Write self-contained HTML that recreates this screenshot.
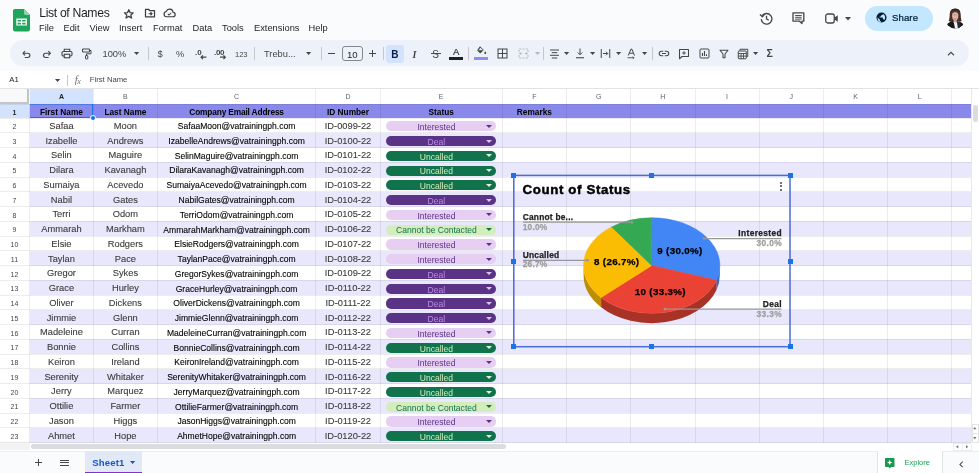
<!DOCTYPE html><html><head><meta charset="utf-8"><title>List of Names</title>
<style>
*{box-sizing:border-box;margin:0;padding:0}
html,body{width:979px;height:473px;overflow:hidden;background:#f9fbfd;font-family:"Liberation Sans",sans-serif;color:#1f1f1f}
.abs,.abs *{position:absolute}
#app{will-change:transform;position:relative;width:979px;height:473px;overflow:hidden;background:#f9fbfd}
.t{position:absolute;white-space:nowrap;line-height:1}
.menu{font-size:9.3px;color:#1f1f1f;top:23.5px}
.ch{font-size:7px;color:#5f6368;text-align:center;top:92.8px}
.rh{font-size:7px;color:#444746;text-align:center;left:0;width:29px}
.c{position:absolute;text-align:center;white-space:nowrap;line-height:1;color:#3a3a3a}
.ca{font-size:9.3px;-webkit-text-stroke:.1px #3a3a3a}
.cc{font-size:8.55px;color:#000;-webkit-text-stroke:.1px #000}
.hd{font-family:"Liberation Sans",sans-serif;font-weight:bold;font-size:8.3px;color:#000}
.chip{position:absolute;border-radius:5.1px;height:10.2px;font-size:8.55px;text-align:center;white-space:nowrap}
.chip b{position:absolute;left:0;right:9.5px;top:.9px;line-height:10px;font-weight:normal;text-align:center}
.chip i{position:absolute;right:4.1px;top:3.6px;width:0;height:0;border-left:3px solid transparent;border-right:3px solid transparent;border-top:3.6px solid currentColor}
svg{position:absolute;overflow:visible}
.lb{font-size:8.400px;font-weight:bold;letter-spacing:.22px;-webkit-text-stroke:.25px currentColor}
.sl{font-size:9.800px;font-weight:bold;color:#000;text-align:center;letter-spacing:.3px;-webkit-text-stroke:.25px #000}
</style></head><body><div id="app">
<svg style="left:13.200px;top:8.800px" width="17" height="22.400" viewBox="0 0 17 22.400"><path d="M1.800 0h9.200l6 6v14.600a1.800 1.800 0 0 1-1.800 1.800H1.800A1.800 1.800 0 0 1 0 20.600V1.800A1.800 1.800 0 0 1 1.800 0z" fill="#1ea45b"/><path d="M11 0l6 6h-4.600A1.400 1.400 0 0 1 11 4.600z" fill="#8fd3ae"/><path d="M3.300 9.600h10.600v7H3.300z M4.600 10.900v1.600h3.300v-1.600z M9.200 10.900v1.600h3.400v-1.600z M4.600 13.800v1.600h3.300v-1.600z M9.200 13.800v1.600h3.400v-1.600z" fill="#fff" fill-rule="evenodd"/></svg>
<div class="t" style="left:39.2px;top:6.7px;font-size:12.2px;letter-spacing:-.33px;color:#1f1f1f">List of Names</div>
<svg style="left:123.200px;top:7.600px" width="11.600" height="11.600" viewBox="0 0 24 24"><path d="M12 3.500l2.600 6 6.500.600-4.900 4.300 1.500 6.400L12 17.400 6.300 20.800l1.500-6.400-4.900-4.300 6.500-.600z" fill="none" stroke="#3c3f3e" stroke-width="2.600" stroke-linejoin="round"/></svg>
<svg style="left:143.700px;top:8.400px" width="12" height="10" viewBox="0 0 24 20"><path d="M3 2.500h6l2 2.500h10v12.500H3z" fill="none" stroke="#3c3f3e" stroke-width="2.500" stroke-linejoin="round"/><path d="M9 11.500h7m-3-3l3 3-3 3" fill="none" stroke="#3c3f3e" stroke-width="2.200"/></svg>
<svg style="left:163.200px;top:8px" width="13" height="10.500" viewBox="0 0 26 21"><path d="M7 17.500h12.500a4.500 4.500 0 0 0 .600-9A7 7 0 0 0 6.500 7 5.300 5.300 0 0 0 7 17.500z" fill="none" stroke="#3c3f3e" stroke-width="2.400" stroke-linejoin="round"/><path d="M9.500 11.500l2.500 2.500 4.500-4.500" fill="none" stroke="#3c3f3e" stroke-width="2.100"/></svg>
<div class="t menu" style="left:39px">File</div>
<div class="t menu" style="left:63.5px">Edit</div>
<div class="t menu" style="left:89.5px">View</div>
<div class="t menu" style="left:119px">Insert</div>
<div class="t menu" style="left:153px">Format</div>
<div class="t menu" style="left:192.5px">Data</div>
<div class="t menu" style="left:222px">Tools</div>
<div class="t menu" style="left:254px">Extensions</div>
<div class="t menu" style="left:308.5px">Help</div>
<svg style="left:759px;top:10.500px" width="15" height="15" viewBox="0 0 24 24"><path d="M5.200 7.500A8.500 8.500 0 1 1 3.600 13" fill="none" stroke="#444746" stroke-width="2.100"/><path d="M1.500 5.500l4 3.800 3.600-4.200" fill="none" stroke="#444746" stroke-width="2.100"/><path d="M12 7.500v5l3.500 2.200" fill="none" stroke="#444746" stroke-width="2.100"/></svg>
<svg style="left:790.600px;top:11.300px" width="14.800" height="14.400" viewBox="0 0 24 24"><path d="M3 3h18v14h-3v4l-4-4H3z" fill="none" stroke="#444746" stroke-width="2.200" stroke-linejoin="round"/><path d="M6.500 7.500h11M6.500 10.500h11M6.500 13.500h11" stroke="#444746" stroke-width="1.600"/></svg>
<svg style="left:825px;top:13px" width="14" height="11" viewBox="0 0 28 22"><rect x="1.500" y="2" width="17" height="18" rx="4" fill="none" stroke="#444746" stroke-width="2.600"/><path d="M19 9l6.500-4.500v13L19 13z" fill="#444746"/></svg>
<svg style="left:845px;top:16.500px" width="6" height="4" viewBox="0 0 6 4"><path d="M0 0h6L3 3.500z" fill="#444746"/></svg>
<div class="t" style="left:865px;top:6px;width:68px;height:25px;border-radius:12.500px;background:#c2e7ff"></div>
<svg style="left:876px;top:12.200px" width="11" height="11" viewBox="0 0 24 24"><circle cx="12" cy="12" r="11" fill="#001d35"/><path d="M10.500 21.900v-2.100c-1.100 0-2-.900-2-2v-1l-4.800-4.800c-.100.600-.200 1.300-.200 2 0 4.100 3.100 7.400 7 7.900zM17.900 17.400c-.300-.800-1-1.400-1.900-1.400h-1v-3c0-.600-.400-1-1-1H8v-2h2c.600 0 1-.400 1-1V7h2c1.100 0 2-.900 2-2v-.400c2.900 1.200 5 4.100 5 7.400 0 2.100-.800 4-2.100 5.400z" fill="#c2e7ff"/></svg>
<div class="t" style="left:892px;top:12.900px;font-size:9.600px;color:#001d35;font-weight:normal;letter-spacing:.1px;-webkit-text-stroke:.22px #001d35">Share</div>
<svg style="left:935px;top:0" width="44" height="36" viewBox="935 0 44 36"><defs><clipPath id="av"><circle cx="955.2" cy="18.400" r="10.200"/></clipPath></defs><circle cx="955.2" cy="18.400" r="10.200" fill="#fefefe"/><g clip-path="url(#av)"><path d="M955.200 8.600c-3.400 0-5.300 2.300-5.500 5.600-.100 2.600-.200 4.600-1 6.900 1.200.900 3 1.200 4.500 1h4c1.600.200 3.300-.100 4.500-1-.800-2.300-.900-4.300-1-6.900-.200-3.300-2.100-5.600-5.500-5.600z" fill="#4a2f27"/><path d="M955.200 8.600c-2.600 0-4.300 1.300-5 3.300 1.500-1.300 3.200-1.700 5-1.700s3.500.400 5 1.700c-.700-2-2.400-3.300-5-3.300z" fill="#33211d"/><path d="M953.700 18.500h3v4h-3z" fill="#d2a692"/><ellipse cx="955.200" cy="15.700" rx="3.100" ry="4.500" fill="#dcb7a7"/><path d="M952.300 13.600c.400-1.900 1.700-2.700 2.900-2.700s2.500.800 2.900 2.700c-.900-1-1.800-1.400-2.900-1.400s-2 .400-2.900 1.400z" fill="#4a2f27"/><ellipse cx="955.200" cy="18.900" rx="1" ry=".550" fill="#d9646a"/><path d="M953.950 14.900h.900M955.600 14.900h.900" stroke="#7b5a50" stroke-width=".700"/><path d="M947 24.300c1.200-1.700 3.600-2.500 5.800-3l2.400 3.200 2.400-3.200c2.200.500 4.600 1.300 5.800 3l1.500 6h-19.400z" fill="#14171c"/><path d="M953.600 21.600l1.600 7.800 2.900-.200 1.500-7.400-1.700-.600-2.700 2.500-1.200-2.300z" fill="#eef3f8"/><path d="M956.900 21.200l2.900.900 1.800 7h-3.600z" fill="#232a33"/></g></svg>
<div class="t" style="left:10px;top:40px;width:959px;height:26px;border-radius:13px;background:#edf2fa"></div>
<svg style="left:22.30px;top:49.90px" width="9.4" height="8.6" viewBox="0 0 22 20"><path d="M7 2.500L2.500 7.500l4.500 5" fill="none" stroke="#444746" stroke-width="2.700"/><path d="M3 7.500h10.500a5 5 0 0 1 0 10H6.500" fill="none" stroke="#444746" stroke-width="2.700"/></svg>
<svg style="left:42.20px;top:49.90px" width="9.4" height="8.6" viewBox="0 0 22 20"><path d="M15 2.500l4.500 5-4.500 5" fill="none" stroke="#444746" stroke-width="2.700"/><path d="M19 7.500H8.500a5 5 0 0 0 0 10h7" fill="none" stroke="#444746" stroke-width="2.700"/></svg>
<svg style="left:60.70px;top:48.40px" width="12" height="11" viewBox="0 0 24 22"><path d="M6.500 7V2.500h11V7" fill="none" stroke="#444746" stroke-width="2.200"/><rect x="2" y="7" width="20" height="9" rx="2.500" fill="none" stroke="#444746" stroke-width="2.200"/><rect x="6.500" y="12.500" width="11" height="7" fill="#edf2fa" stroke="#444746" stroke-width="2.200"/></svg>
<svg style="left:80.70px;top:47.90px" width="11" height="12" viewBox="0 0 22 24"><rect x="3" y="2" width="14" height="6" rx="1.500" fill="none" stroke="#444746" stroke-width="2.200"/><path d="M17 5h3v6.500h-9V15" fill="none" stroke="#444746" stroke-width="2"/><rect x="9" y="15" width="4.500" height="7" rx="1" fill="none" stroke="#444746" stroke-width="2"/></svg>
<div class="t" style="left:102.500px;top:50px;font-size:9.300px;color:#444746">100%</div>
<svg style="left:134.40px;top:52.30px" width="5.2" height="3" viewBox="0 0 52 30"><path d="M0 0h52L26 30z" fill="#444746"/></svg>
<div class="t" style="left:147.7px;top:47px;width:1px;height:13px;background:#c7c7c7"></div>
<div class="t" style="left:157.400px;top:50px;font-size:9.300px;color:#444746">$</div>
<div class="t" style="left:176px;top:50px;font-size:9.300px;color:#444746">%</div>
<div class="t" style="left:195px;top:48.600px;font-size:8px;font-weight:bold;color:#444746">.0</div>
<svg style="left:200.00px;top:55.20px" width="6.4" height="4.4" viewBox="0 0 12 8"><path d="M12 4H2M5.500 .500L2 4l3.500 3.500" fill="none" stroke="#444746" stroke-width="2.300"/></svg>
<div class="t" style="left:214px;top:48.600px;font-size:8px;font-weight:bold;color:#444746;letter-spacing:-.3px">.00</div>
<svg style="left:220.30px;top:55.20px" width="6.4" height="4.4" viewBox="0 0 12 8"><path d="M0 4h10M6.500 .500L10 4l-3.500 3.500" fill="none" stroke="#444746" stroke-width="2.300"/></svg>
<div class="t" style="left:235px;top:51px;font-size:7.500px;color:#444746">123</div>
<div class="t" style="left:253.5px;top:47px;width:1px;height:13px;background:#c7c7c7"></div>
<div class="t" style="left:264px;top:50px;font-size:9.300px;color:#444746">Trebu...</div>
<svg style="left:306.40px;top:52.30px" width="5.2" height="3" viewBox="0 0 52 30"><path d="M0 0h52L26 30z" fill="#444746"/></svg>
<div class="t" style="left:320.8px;top:47px;width:1px;height:13px;background:#c7c7c7"></div>
<div class="t" style="left:327.500px;top:53px;width:7.500px;height:1.200px;background:#444746"></div>
<div class="t" style="left:341.500px;top:45.500px;width:21.500px;height:15.500px;border:1px solid #858886;border-radius:3px;background:#edf2fa"></div>
<div class="t" style="left:341.500px;top:49.500px;width:21.500px;text-align:center;font-size:9.600px;color:#1f1f1f">10</div>
<div class="t" style="left:368.500px;top:53px;width:7.500px;height:1.200px;background:#444746"></div><div class="t" style="left:371.650px;top:49.850px;width:1.200px;height:7.500px;background:#444746"></div>
<div class="t" style="left:382.8px;top:47px;width:1px;height:13px;background:#c7c7c7"></div>
<div class="t" style="left:386.300px;top:44.500px;width:18.200px;height:18.200px;border-radius:3px;background:#d3e3fd"></div>
<div class="t" style="left:391.200px;top:49.500px;font-size:10px;font-weight:bold;color:#041e49">B</div>
<div class="t" style="left:412.500px;top:49.500px;font-size:10px;font-style:italic;font-family:'Liberation Serif',serif;font-weight:bold;color:#444746">I</div>
<div class="t" style="left:432.300px;top:49.500px;font-size:10px;color:#444746">S</div><div class="t" style="left:430.500px;top:53.200px;width:10px;height:1.100px;background:#444746"></div>
<div class="t" style="left:453px;top:47.200px;font-size:9.500px;color:#333;-webkit-text-stroke:.2px #333">A</div><div class="t" style="left:449.200px;top:57px;width:14.200px;height:2.600px;background:#1f1f1f"></div>
<div class="t" style="left:468.3px;top:47px;width:1px;height:13px;background:#c7c7c7"></div>
<svg style="left:475.80px;top:45.20px" width="11" height="10" viewBox="0 0 22 20"><path d="M8 2.500l7.500 7.500-6 6a1.500 1.500 0 0 1-2 0L3 11.500a1.500 1.500 0 0 1 0-2z" fill="#444746"/><path d="M5 10.500h9L9 5.500z" fill="#edf2fa"/><path d="M18.500 12.500s-2 2.400-2 3.700a2 2 0 0 0 4 0c0-1.300-2-3.700-2-3.700z" fill="#444746"/></svg>
<div class="t" style="left:474.300px;top:57px;width:14.200px;height:2.600px;background:#8e8eec"></div>
<svg style="left:497.40px;top:48.40px" width="11" height="11" viewBox="0 0 22 22"><rect x="2" y="2" width="18" height="18" fill="none" stroke="#444746" stroke-width="2"/><path d="M11 2v18M2 11h18" stroke="#444746" stroke-width="2"/></svg>
<svg style="left:518.20px;top:48.40px" width="11" height="11" viewBox="0 0 22 22"><path d="M2 8V2h18v6M2 14v6h18v-6" fill="none" stroke="#b4b7bb" stroke-width="2" stroke-dasharray="4 2.500"/><path d="M2 11h5M20 11h-5M5 8.500l2.500 2.500L5 13.500M17 8.500L14.500 11l2.500 2.500" fill="none" stroke="#b4b7bb" stroke-width="1.800"/></svg>
<svg style="left:534.90px;top:52.30px" width="5.2" height="3" viewBox="0 0 52 30"><path d="M0 0h52L26 30z" fill="#b4b7bb"/></svg>
<div class="t" style="left:543.1px;top:47px;width:1px;height:13px;background:#c7c7c7"></div>
<svg style="left:548.90px;top:48.90px" width="11" height="10" viewBox="0 0 22 20"><path d="M2 2h18M5.500 7.300h11M2 12.600h18M5.500 18h11" stroke="#444746" stroke-width="2"/></svg>
<svg style="left:564.00px;top:52.30px" width="5.2" height="3" viewBox="0 0 52 30"><path d="M0 0h52L26 30z" fill="#444746"/></svg>
<svg style="left:575.40px;top:48.40px" width="10" height="11" viewBox="0 0 20 22"><path d="M10 1v12M5.500 9l4.500 4.500L14.500 9" fill="none" stroke="#444746" stroke-width="2"/><path d="M2 19.500h16" stroke="#444746" stroke-width="2.200"/></svg>
<svg style="left:589.80px;top:52.30px" width="5.2" height="3" viewBox="0 0 52 30"><path d="M0 0h52L26 30z" fill="#444746"/></svg>
<svg style="left:600.30px;top:48.40px" width="11" height="11" viewBox="0 0 22 22"><path d="M2.500 2v18M19.500 2v18" stroke="#444746" stroke-width="2"/><path d="M6 11h9M12 7.500l3.500 3.500-3.500 3.500" fill="none" stroke="#444746" stroke-width="2"/></svg>
<svg style="left:615.80px;top:52.30px" width="5.2" height="3" viewBox="0 0 52 30"><path d="M0 0h52L26 30z" fill="#444746"/></svg>
<svg style="left:626.40px;top:48.40px" width="11" height="11" viewBox="0 0 22 22"><path d="M4.500 15L10 2h1.500L17 15M7 10.500h7.500" fill="none" stroke="#444746" stroke-width="2"/><path d="M3 19.500h13M13.500 17l2.500 2.500-2.500 2.500" fill="none" stroke="#444746" stroke-width="1.700"/></svg>
<svg style="left:641.90px;top:52.30px" width="5.2" height="3" viewBox="0 0 52 30"><path d="M0 0h52L26 30z" fill="#444746"/></svg>
<div class="t" style="left:651.9px;top:47px;width:1px;height:13px;background:#c7c7c7"></div>
<svg style="left:657.80px;top:50.40px" width="12" height="7" viewBox="0 0 24 14"><path d="M10.500 2.500H7a4.500 4.500 0 0 0 0 9h3.500M13.500 2.500H17a4.500 4.500 0 0 1 0 9h-3.500M8 7h8" fill="none" stroke="#444746" stroke-width="2.200"/></svg>
<svg style="left:677.70px;top:47.90px" width="12" height="12" viewBox="0 0 24 24"><path d="M3 3h18v14H8l-5 4.500z" fill="none" stroke="#444746" stroke-width="2.100" stroke-linejoin="round"/><path d="M12 6.500v7M8.500 10h7" stroke="#444746" stroke-width="2"/></svg>
<svg style="left:699.00px;top:48.40px" width="11" height="11" viewBox="0 0 22 22"><rect x="2" y="2" width="18" height="18" rx="2" fill="none" stroke="#444746" stroke-width="2"/><path d="M7 16V10M11 16V6M15 16v-3.500" stroke="#444746" stroke-width="2.200"/></svg>
<svg style="left:719.10px;top:48.90px" width="10" height="10" viewBox="0 0 20 20"><path d="M2 2.500h16l-6 7.500v7.500h-4V10z" fill="none" stroke="#444746" stroke-width="2.100" stroke-linejoin="round"/></svg>
<svg style="left:736.80px;top:47.90px" width="12" height="12" viewBox="0 0 24 24"><path d="M6 5V2.500h15.500V17H19" fill="none" stroke="#444746" stroke-width="2"/><rect x="2.500" y="6" width="16" height="15.500" rx="1.500" fill="none" stroke="#444746" stroke-width="2"/><path d="M2.500 11h16M8 11v10.500M13 11v10.500M2.500 16.200h16" stroke="#444746" stroke-width="1.800"/></svg>
<svg style="left:752.50px;top:52.30px" width="5.2" height="3" viewBox="0 0 52 30"><path d="M0 0h52L26 30z" fill="#444746"/></svg>
<div class="t" style="left:766.500px;top:48.200px;font-size:10.500px;font-weight:bold;color:#444746">&Sigma;</div>
<svg style="left:947.20px;top:51.10px" width="8" height="5" viewBox="0 0 16 10"><path d="M2 8.500l6-6 6 6" fill="none" stroke="#444746" stroke-width="2.200"/></svg>
<div class="t" style="left:0;top:71px;width:979px;height:17.500px;background:#fff"></div>
<div class="t" style="left:9.200px;top:76.300px;font-size:7.800px;color:#1f1f1f">A1</div>
<svg style="left:54.60px;top:78.50px" width="5.2" height="3" viewBox="0 0 52 30"><path d="M0 0h52L26 30z" fill="#444746"/></svg>
<div class="t" style="left:67.100px;top:75px;width:1px;height:11px;background:#c7c7c7"></div>
<div class="t" style="left:74.800px;top:74.500px;font-size:10.500px;font-style:italic;font-family:'Liberation Serif',serif;color:#6b6f73">f<span style="font-size:8px;vertical-align:-1.200px;margin-left:-.500px">x</span></div>
<div class="t" style="left:89.800px;top:76.200px;font-size:7.700px;color:#444746">First Name</div>
<div class="t" style="left:0;top:88.6px;width:979px;height:352.9px;background:#fff"></div>
<div class="t" style="left:0;top:88.0px;width:979px;height:1px;background:#e3e3e3"></div>
<div class="t" style="left:29.5px;top:104.40px;width:941.8px;height:13.60px;background:#8989eb"></div>
<div class="t" style="left:29.5px;top:132.76px;width:941.8px;height:14.76px;background:#e8e7fc"></div>
<div class="t" style="left:29.5px;top:162.28px;width:941.8px;height:14.76px;background:#e8e7fc"></div>
<div class="t" style="left:29.5px;top:191.80px;width:941.8px;height:14.76px;background:#e8e7fc"></div>
<div class="t" style="left:29.5px;top:221.32px;width:941.8px;height:14.76px;background:#e8e7fc"></div>
<div class="t" style="left:29.5px;top:250.84px;width:941.8px;height:14.76px;background:#e8e7fc"></div>
<div class="t" style="left:29.5px;top:280.36px;width:941.8px;height:14.76px;background:#e8e7fc"></div>
<div class="t" style="left:29.5px;top:309.88px;width:941.8px;height:14.76px;background:#e8e7fc"></div>
<div class="t" style="left:29.5px;top:339.40px;width:941.8px;height:14.76px;background:#e8e7fc"></div>
<div class="t" style="left:29.5px;top:368.92px;width:941.8px;height:14.76px;background:#e8e7fc"></div>
<div class="t" style="left:29.5px;top:398.44px;width:941.8px;height:14.76px;background:#e8e7fc"></div>
<div class="t" style="left:29.5px;top:427.96px;width:941.8px;height:14.76px;background:#e8e7fc"></div>
<div class="t" style="left:29.5px;top:89.2px;width:63.9px;height:15.2px;background:#d3e3fd"></div>
<div class="t" style="left:0;top:104.40px;width:29.5px;height:13.60px;background:#d3e3fd"></div>
<div class="t ch" style="left:29.5px;width:63.9px;font-weight:bold;color:#1f1f1f;">A</div>
<div class="t ch" style="left:93.4px;width:64.0px;">B</div>
<div class="t ch" style="left:157.4px;width:158.4px;">C</div>
<div class="t ch" style="left:315.8px;width:64.4px;">D</div>
<div class="t ch" style="left:380.2px;width:122.0px;">E</div>
<div class="t ch" style="left:502.2px;width:64.4px;">F</div>
<div class="t ch" style="left:566.6px;width:64.2px;">G</div>
<div class="t ch" style="left:630.8px;width:64.2px;">H</div>
<div class="t ch" style="left:695.0px;width:64.2px;">I</div>
<div class="t ch" style="left:759.2px;width:64.2px;">J</div>
<div class="t ch" style="left:823.4px;width:64.2px;">K</div>
<div class="t ch" style="left:887.6px;width:64.2px;">L</div>
<div class="t rh" style="top:108.80px;font-weight:bold;color:#1f1f1f;">1</div>
<div class="t rh" style="top:122.98px;">2</div>
<div class="t rh" style="top:137.74px;">3</div>
<div class="t rh" style="top:152.50px;">4</div>
<div class="t rh" style="top:167.26px;">5</div>
<div class="t rh" style="top:182.02px;">6</div>
<div class="t rh" style="top:196.78px;">7</div>
<div class="t rh" style="top:211.54px;">8</div>
<div class="t rh" style="top:226.30px;">9</div>
<div class="t rh" style="top:241.06px;">10</div>
<div class="t rh" style="top:255.82px;">11</div>
<div class="t rh" style="top:270.58px;">12</div>
<div class="t rh" style="top:285.34px;">13</div>
<div class="t rh" style="top:300.10px;">14</div>
<div class="t rh" style="top:314.86px;">15</div>
<div class="t rh" style="top:329.62px;">16</div>
<div class="t rh" style="top:344.38px;">17</div>
<div class="t rh" style="top:359.14px;">18</div>
<div class="t rh" style="top:373.90px;">19</div>
<div class="t rh" style="top:388.66px;">20</div>
<div class="t rh" style="top:403.42px;">21</div>
<div class="t rh" style="top:418.18px;">22</div>
<div class="t rh" style="top:432.94px;">23</div>
<div class="t" style="left:29.0px;top:89.2px;width:1px;height:353.5px;background:rgba(0,0,0,.07)"></div>
<div class="t" style="left:92.9px;top:89.2px;width:1px;height:353.5px;background:rgba(0,0,0,.07)"></div>
<div class="t" style="left:156.9px;top:89.2px;width:1px;height:353.5px;background:rgba(0,0,0,.07)"></div>
<div class="t" style="left:315.3px;top:89.2px;width:1px;height:353.5px;background:rgba(0,0,0,.07)"></div>
<div class="t" style="left:379.7px;top:89.2px;width:1px;height:353.5px;background:rgba(0,0,0,.07)"></div>
<div class="t" style="left:501.7px;top:89.2px;width:1px;height:353.5px;background:rgba(0,0,0,.07)"></div>
<div class="t" style="left:566.1px;top:89.2px;width:1px;height:353.5px;background:rgba(0,0,0,.07)"></div>
<div class="t" style="left:630.3px;top:89.2px;width:1px;height:353.5px;background:rgba(0,0,0,.07)"></div>
<div class="t" style="left:694.5px;top:89.2px;width:1px;height:353.5px;background:rgba(0,0,0,.07)"></div>
<div class="t" style="left:758.7px;top:89.2px;width:1px;height:353.5px;background:rgba(0,0,0,.07)"></div>
<div class="t" style="left:822.9px;top:89.2px;width:1px;height:353.5px;background:rgba(0,0,0,.07)"></div>
<div class="t" style="left:887.1px;top:89.2px;width:1px;height:353.5px;background:rgba(0,0,0,.07)"></div>
<div class="t" style="left:951.3px;top:89.2px;width:1px;height:353.5px;background:rgba(0,0,0,.07)"></div>
<div class="t" style="left:0;top:103.90px;width:971.3px;height:1px;background:rgba(0,0,0,.07)"></div>
<div class="t" style="left:0;top:117.50px;width:971.3px;height:1px;background:rgba(0,0,0,.07)"></div>
<div class="t" style="left:0;top:132.26px;width:971.3px;height:1px;background:rgba(0,0,0,.07)"></div>
<div class="t" style="left:0;top:147.02px;width:971.3px;height:1px;background:rgba(0,0,0,.07)"></div>
<div class="t" style="left:0;top:161.78px;width:971.3px;height:1px;background:rgba(0,0,0,.07)"></div>
<div class="t" style="left:0;top:176.54px;width:971.3px;height:1px;background:rgba(0,0,0,.07)"></div>
<div class="t" style="left:0;top:191.30px;width:971.3px;height:1px;background:rgba(0,0,0,.07)"></div>
<div class="t" style="left:0;top:206.06px;width:971.3px;height:1px;background:rgba(0,0,0,.07)"></div>
<div class="t" style="left:0;top:220.82px;width:971.3px;height:1px;background:rgba(0,0,0,.07)"></div>
<div class="t" style="left:0;top:235.58px;width:971.3px;height:1px;background:rgba(0,0,0,.07)"></div>
<div class="t" style="left:0;top:250.34px;width:971.3px;height:1px;background:rgba(0,0,0,.07)"></div>
<div class="t" style="left:0;top:265.10px;width:971.3px;height:1px;background:rgba(0,0,0,.07)"></div>
<div class="t" style="left:0;top:279.86px;width:971.3px;height:1px;background:rgba(0,0,0,.07)"></div>
<div class="t" style="left:0;top:294.62px;width:971.3px;height:1px;background:rgba(0,0,0,.07)"></div>
<div class="t" style="left:0;top:309.38px;width:971.3px;height:1px;background:rgba(0,0,0,.07)"></div>
<div class="t" style="left:0;top:324.14px;width:971.3px;height:1px;background:rgba(0,0,0,.07)"></div>
<div class="t" style="left:0;top:338.90px;width:971.3px;height:1px;background:rgba(0,0,0,.07)"></div>
<div class="t" style="left:0;top:353.66px;width:971.3px;height:1px;background:rgba(0,0,0,.07)"></div>
<div class="t" style="left:0;top:368.42px;width:971.3px;height:1px;background:rgba(0,0,0,.07)"></div>
<div class="t" style="left:0;top:383.18px;width:971.3px;height:1px;background:rgba(0,0,0,.07)"></div>
<div class="t" style="left:0;top:397.94px;width:971.3px;height:1px;background:rgba(0,0,0,.07)"></div>
<div class="t" style="left:0;top:412.70px;width:971.3px;height:1px;background:rgba(0,0,0,.07)"></div>
<div class="t" style="left:0;top:427.46px;width:971.3px;height:1px;background:rgba(0,0,0,.07)"></div>
<div class="t" style="left:0;top:442.22px;width:971.3px;height:1px;background:rgba(0,0,0,.07)"></div>
<div class="t" style="left:0;top:89.2px;width:29.5px;height:15.2px;background:#f8f9fa"></div>
<div class="t" style="left:27.3px;top:89.2px;width:2px;height:15.2px;background:#c4c4c4"></div>
<div class="t" style="left:0;top:102.2px;width:29.3px;height:2px;background:#c4c4c4"></div>
<div class="c hd" style="left:29.5px;width:63.9px;top:107.80px">First Name</div>
<div class="c hd" style="left:93.4px;width:64.0px;top:107.80px">Last Name</div>
<div class="c hd" style="left:157.4px;width:158.4px;top:107.80px;letter-spacing:-.14px">Company Email Address</div>
<div class="c hd" style="left:315.8px;width:64.4px;top:107.80px">ID Number</div>
<div class="c hd" style="left:380.2px;width:122.0px;top:107.80px">Status</div>
<div class="c hd" style="left:502.2px;width:64.4px;top:107.80px">Remarks</div>
<div class="c ca" style="left:29.5px;width:63.9px;top:121.80px">Safaa</div>
<div class="c ca" style="left:93.4px;width:64.0px;top:121.80px">Moon</div>
<div class="c cc" style="left:157.4px;width:158.4px;top:122.20px">SafaaMoon@vatrainingph.com</div>
<div class="c ca" style="left:315.8px;width:64.4px;top:121.80px">ID-0099-22</div>
<div class="chip" style="left:385.800px;top:121.25px;width:110.700px;background:#e6cff2;color:#5a3286"><b>Interested</b><i style="color:#5a3286"></i></div>
<div class="c ca" style="left:29.5px;width:63.9px;top:136.56px">Izabelle</div>
<div class="c ca" style="left:93.4px;width:64.0px;top:136.56px">Andrews</div>
<div class="c cc" style="left:157.4px;width:158.4px;top:136.96px">IzabelleAndrews@vatrainingph.com</div>
<div class="c ca" style="left:315.8px;width:64.4px;top:136.56px">ID-0100-22</div>
<div class="chip" style="left:385.800px;top:136.01px;width:110.700px;background:#5a3286;color:#bd8ae6"><b>Deal</b><i style="color:#dcc3f0"></i></div>
<div class="c ca" style="left:29.5px;width:63.9px;top:151.32px">Selin</div>
<div class="c ca" style="left:93.4px;width:64.0px;top:151.32px">Maguire</div>
<div class="c cc" style="left:157.4px;width:158.4px;top:151.72px">SelinMaguire@vatrainingph.com</div>
<div class="c ca" style="left:315.8px;width:64.4px;top:151.32px">ID-0101-22</div>
<div class="chip" style="left:385.800px;top:150.77px;width:110.700px;background:#11734b;color:#d4edbc"><b>Uncalled</b><i style="color:#e4f3d6"></i></div>
<div class="c ca" style="left:29.5px;width:63.9px;top:166.08px">Dilara</div>
<div class="c ca" style="left:93.4px;width:64.0px;top:166.08px">Kavanagh</div>
<div class="c cc" style="left:157.4px;width:158.4px;top:166.48px">DilaraKavanagh@vatrainingph.com</div>
<div class="c ca" style="left:315.8px;width:64.4px;top:166.08px">ID-0102-22</div>
<div class="chip" style="left:385.800px;top:165.53px;width:110.700px;background:#11734b;color:#d4edbc"><b>Uncalled</b><i style="color:#e4f3d6"></i></div>
<div class="c ca" style="left:29.5px;width:63.9px;top:180.84px">Sumaiya</div>
<div class="c ca" style="left:93.4px;width:64.0px;top:180.84px">Acevedo</div>
<div class="c cc" style="left:157.4px;width:158.4px;top:181.24px">SumaiyaAcevedo@vatrainingph.com</div>
<div class="c ca" style="left:315.8px;width:64.4px;top:180.84px">ID-0103-22</div>
<div class="chip" style="left:385.800px;top:180.29px;width:110.700px;background:#11734b;color:#d4edbc"><b>Uncalled</b><i style="color:#e4f3d6"></i></div>
<div class="c ca" style="left:29.5px;width:63.9px;top:195.60px">Nabil</div>
<div class="c ca" style="left:93.4px;width:64.0px;top:195.60px">Gates</div>
<div class="c cc" style="left:157.4px;width:158.4px;top:196.00px">NabilGates@vatrainingph.com</div>
<div class="c ca" style="left:315.8px;width:64.4px;top:195.60px">ID-0104-22</div>
<div class="chip" style="left:385.800px;top:195.05px;width:110.700px;background:#5a3286;color:#bd8ae6"><b>Deal</b><i style="color:#dcc3f0"></i></div>
<div class="c ca" style="left:29.5px;width:63.9px;top:210.36px">Terri</div>
<div class="c ca" style="left:93.4px;width:64.0px;top:210.36px">Odom</div>
<div class="c cc" style="left:157.4px;width:158.4px;top:210.76px">TerriOdom@vatrainingph.com</div>
<div class="c ca" style="left:315.8px;width:64.4px;top:210.36px">ID-0105-22</div>
<div class="chip" style="left:385.800px;top:209.81px;width:110.700px;background:#e6cff2;color:#5a3286"><b>Interested</b><i style="color:#5a3286"></i></div>
<div class="c ca" style="left:29.5px;width:63.9px;top:225.12px">Ammarah</div>
<div class="c ca" style="left:93.4px;width:64.0px;top:225.12px">Markham</div>
<div class="c cc" style="left:157.4px;width:158.4px;top:225.52px">AmmarahMarkham@vatrainingph.com</div>
<div class="c ca" style="left:315.8px;width:64.4px;top:225.12px">ID-0106-22</div>
<div class="chip" style="left:385.800px;top:224.57px;width:110.700px;background:#d4edbc;color:#11734b"><b>Cannot be Contacted</b><i style="color:#11734b"></i></div>
<div class="c ca" style="left:29.5px;width:63.9px;top:239.88px">Elsie</div>
<div class="c ca" style="left:93.4px;width:64.0px;top:239.88px">Rodgers</div>
<div class="c cc" style="left:157.4px;width:158.4px;top:240.28px">ElsieRodgers@vatrainingph.com</div>
<div class="c ca" style="left:315.8px;width:64.4px;top:239.88px">ID-0107-22</div>
<div class="chip" style="left:385.800px;top:239.33px;width:110.700px;background:#e6cff2;color:#5a3286"><b>Interested</b><i style="color:#5a3286"></i></div>
<div class="c ca" style="left:29.5px;width:63.9px;top:254.64px">Taylan</div>
<div class="c ca" style="left:93.4px;width:64.0px;top:254.64px">Pace</div>
<div class="c cc" style="left:157.4px;width:158.4px;top:255.04px">TaylanPace@vatrainingph.com</div>
<div class="c ca" style="left:315.8px;width:64.4px;top:254.64px">ID-0108-22</div>
<div class="chip" style="left:385.800px;top:254.09px;width:110.700px;background:#e6cff2;color:#5a3286"><b>Interested</b><i style="color:#5a3286"></i></div>
<div class="c ca" style="left:29.5px;width:63.9px;top:269.40px">Gregor</div>
<div class="c ca" style="left:93.4px;width:64.0px;top:269.40px">Sykes</div>
<div class="c cc" style="left:157.4px;width:158.4px;top:269.80px">GregorSykes@vatrainingph.com</div>
<div class="c ca" style="left:315.8px;width:64.4px;top:269.40px">ID-0109-22</div>
<div class="chip" style="left:385.800px;top:268.85px;width:110.700px;background:#5a3286;color:#bd8ae6"><b>Deal</b><i style="color:#dcc3f0"></i></div>
<div class="c ca" style="left:29.5px;width:63.9px;top:284.16px">Grace</div>
<div class="c ca" style="left:93.4px;width:64.0px;top:284.16px">Hurley</div>
<div class="c cc" style="left:157.4px;width:158.4px;top:284.56px">GraceHurley@vatrainingph.com</div>
<div class="c ca" style="left:315.8px;width:64.4px;top:284.16px">ID-0110-22</div>
<div class="chip" style="left:385.800px;top:283.61px;width:110.700px;background:#5a3286;color:#bd8ae6"><b>Deal</b><i style="color:#dcc3f0"></i></div>
<div class="c ca" style="left:29.5px;width:63.9px;top:298.92px">Oliver</div>
<div class="c ca" style="left:93.4px;width:64.0px;top:298.92px">Dickens</div>
<div class="c cc" style="left:157.4px;width:158.4px;top:299.32px">OliverDickens@vatrainingph.com</div>
<div class="c ca" style="left:315.8px;width:64.4px;top:298.92px">ID-0111-22</div>
<div class="chip" style="left:385.800px;top:298.37px;width:110.700px;background:#5a3286;color:#bd8ae6"><b>Deal</b><i style="color:#dcc3f0"></i></div>
<div class="c ca" style="left:29.5px;width:63.9px;top:313.68px">Jimmie</div>
<div class="c ca" style="left:93.4px;width:64.0px;top:313.68px">Glenn</div>
<div class="c cc" style="left:157.4px;width:158.4px;top:314.08px">JimmieGlenn@vatrainingph.com</div>
<div class="c ca" style="left:315.8px;width:64.4px;top:313.68px">ID-0112-22</div>
<div class="chip" style="left:385.800px;top:313.13px;width:110.700px;background:#5a3286;color:#bd8ae6"><b>Deal</b><i style="color:#dcc3f0"></i></div>
<div class="c ca" style="left:29.5px;width:63.9px;top:328.44px">Madeleine</div>
<div class="c ca" style="left:93.4px;width:64.0px;top:328.44px">Curran</div>
<div class="c cc" style="left:157.4px;width:158.4px;top:328.84px">MadeleineCurran@vatrainingph.com</div>
<div class="c ca" style="left:315.8px;width:64.4px;top:328.44px">ID-0113-22</div>
<div class="chip" style="left:385.800px;top:327.89px;width:110.700px;background:#e6cff2;color:#5a3286"><b>Interested</b><i style="color:#5a3286"></i></div>
<div class="c ca" style="left:29.5px;width:63.9px;top:343.20px">Bonnie</div>
<div class="c ca" style="left:93.4px;width:64.0px;top:343.20px">Collins</div>
<div class="c cc" style="left:157.4px;width:158.4px;top:343.60px">BonnieCollins@vatrainingph.com</div>
<div class="c ca" style="left:315.8px;width:64.4px;top:343.20px">ID-0114-22</div>
<div class="chip" style="left:385.800px;top:342.65px;width:110.700px;background:#11734b;color:#d4edbc"><b>Uncalled</b><i style="color:#e4f3d6"></i></div>
<div class="c ca" style="left:29.5px;width:63.9px;top:357.96px">Keiron</div>
<div class="c ca" style="left:93.4px;width:64.0px;top:357.96px">Ireland</div>
<div class="c cc" style="left:157.4px;width:158.4px;top:358.36px">KeironIreland@vatrainingph.com</div>
<div class="c ca" style="left:315.8px;width:64.4px;top:357.96px">ID-0115-22</div>
<div class="chip" style="left:385.800px;top:357.41px;width:110.700px;background:#e6cff2;color:#5a3286"><b>Interested</b><i style="color:#5a3286"></i></div>
<div class="c ca" style="left:29.5px;width:63.9px;top:372.72px">Serenity</div>
<div class="c ca" style="left:93.4px;width:64.0px;top:372.72px">Whitaker</div>
<div class="c cc" style="left:157.4px;width:158.4px;top:373.12px">SerenityWhitaker@vatrainingph.com</div>
<div class="c ca" style="left:315.8px;width:64.4px;top:372.72px">ID-0116-22</div>
<div class="chip" style="left:385.800px;top:372.17px;width:110.700px;background:#11734b;color:#d4edbc"><b>Uncalled</b><i style="color:#e4f3d6"></i></div>
<div class="c ca" style="left:29.5px;width:63.9px;top:387.48px">Jerry</div>
<div class="c ca" style="left:93.4px;width:64.0px;top:387.48px">Marquez</div>
<div class="c cc" style="left:157.4px;width:158.4px;top:387.88px">JerryMarquez@vatrainingph.com</div>
<div class="c ca" style="left:315.8px;width:64.4px;top:387.48px">ID-0117-22</div>
<div class="chip" style="left:385.800px;top:386.93px;width:110.700px;background:#11734b;color:#d4edbc"><b>Uncalled</b><i style="color:#e4f3d6"></i></div>
<div class="c ca" style="left:29.5px;width:63.9px;top:402.24px">Ottilie</div>
<div class="c ca" style="left:93.4px;width:64.0px;top:402.24px">Farmer</div>
<div class="c cc" style="left:157.4px;width:158.4px;top:402.64px">OttilieFarmer@vatrainingph.com</div>
<div class="c ca" style="left:315.8px;width:64.4px;top:402.24px">ID-0118-22</div>
<div class="chip" style="left:385.800px;top:401.69px;width:110.700px;background:#d4edbc;color:#11734b"><b>Cannot be Contacted</b><i style="color:#11734b"></i></div>
<div class="c ca" style="left:29.5px;width:63.9px;top:417.00px">Jason</div>
<div class="c ca" style="left:93.4px;width:64.0px;top:417.00px">Higgs</div>
<div class="c cc" style="left:157.4px;width:158.4px;top:417.40px">JasonHiggs@vatrainingph.com</div>
<div class="c ca" style="left:315.8px;width:64.4px;top:417.00px">ID-0119-22</div>
<div class="chip" style="left:385.800px;top:416.45px;width:110.700px;background:#e6cff2;color:#5a3286"><b>Interested</b><i style="color:#5a3286"></i></div>
<div class="c ca" style="left:29.5px;width:63.9px;top:431.76px">Ahmet</div>
<div class="c ca" style="left:93.4px;width:64.0px;top:431.76px">Hope</div>
<div class="c cc" style="left:157.4px;width:158.4px;top:432.16px">AhmetHope@vatrainingph.com</div>
<div class="c ca" style="left:315.8px;width:64.4px;top:431.76px">ID-0120-22</div>
<div class="chip" style="left:385.800px;top:431.21px;width:110.700px;background:#11734b;color:#d4edbc"><b>Uncalled</b><i style="color:#e4f3d6"></i></div>
<div class="t" style="left:29.5px;top:116.50px;width:63.9px;height:1.300px;background:#1a73e8"></div>
<div class="t" style="left:91.9px;top:104.40px;width:1.300px;height:13.60px;background:#1a73e8"></div>
<div class="t" style="left:29.5px;top:104.00px;width:63.9px;height:.800px;background:rgba(26,115,232,.45)"></div>
<div class="t" style="left:90.3px;top:114.90px;width:5.800px;height:5.800px;border-radius:50%;background:#1a73e8;border:.500px solid #fff"></div>
<div class="t" style="left:971.3px;top:89.2px;width:7.7px;height:352.9px;background:#fff;border-left:1px solid #e8e8e8"></div>
<div class="t" style="left:973px;top:104.500px;width:4.500px;height:17px;border-radius:2.300px;background:#dadce0"></div>
<div class="t" style="left:971.600px;top:424.300px;width:7.400px;height:9.500px;border:1px solid #e4e4e4;background:#fff"></div><div class="t" style="left:971.600px;top:432.800px;width:7.400px;height:10.400px;border:1px solid #e4e4e4;background:#fff"></div>
<svg style="left:973.400px;top:426.600px" width="3.600" height="2.200" viewBox="0 0 36 22"><path d="M0 22L18 0l18 22z" fill="#777"/></svg><svg style="left:973.400px;top:437px" width="3.600" height="2.200" viewBox="0 0 36 22"><path d="M0 0l18 22L36 0z" fill="#777"/></svg>
<svg style="left:0;top:0" width="979" height="473" viewBox="0 0 979 473"><path d="M719.80 265.55A68.1 47.75 0 0 1 716.47 280.31L716.47 290.11A68.1 47.75 0 0 0 719.80 275.35Z" fill="#3367c1"/><path d="M716.47 280.31A68.1 47.75 0 0 1 601.09 297.50L601.09 307.30A68.1 47.75 0 0 0 716.47 290.11Z" fill="#a93226"/><path d="M601.09 297.50A68.1 47.75 0 0 1 583.60 265.55L583.60 275.35A68.1 47.75 0 0 0 601.09 307.30Z" fill="#bd8d05"/><path d="M651.7 265.55L651.70 217.80A68.1 47.75 0 0 1 716.47 280.31Z" fill="#4285f4" stroke="#4285f4" stroke-width=".600" stroke-linejoin="round"/><path d="M651.7 265.55L716.47 280.31A68.1 47.75 0 0 1 601.09 297.50Z" fill="#ea4335" stroke="#ea4335" stroke-width=".600" stroke-linejoin="round"/><path d="M651.7 265.55L601.09 297.50A68.1 47.75 0 0 1 611.67 226.92Z" fill="#fbbc04" stroke="#fbbc04" stroke-width=".600" stroke-linejoin="round"/><path d="M651.7 265.55L611.67 226.92A68.1 47.75 0 0 1 651.70 217.80Z" fill="#34a853" stroke="#34a853" stroke-width=".600" stroke-linejoin="round"/><path d="M522.900 222.200H632" stroke="#979797" stroke-width="1.25" fill="none"/><circle cx="632" cy="222.300" r="1.350" fill="#979797"/><path d="M522.900 260.300H587.500" stroke="#979797" stroke-width="1.25" fill="none"/><circle cx="587.500" cy="260.300" r="1.350" fill="#979797"/><path d="M781.400 238.500H704" stroke="#979797" stroke-width="1.25" fill="none"/><circle cx="704" cy="238.500" r="1.350" fill="#979797"/><path d="M781.400 309.200H665" stroke="#979797" stroke-width="1.25" fill="none"/><circle cx="665" cy="309.200" r="1.350" fill="#979797"/></svg>
<div class="t" style="left:522.500px;top:182.500px;font-size:13.300px;font-weight:bold;color:#000;letter-spacing:.62px;-webkit-text-stroke:.45px #000">Count of Status</div>
<div class="t lb" style="left:522.7px;top:212.9px;color:#222">Cannot be...</div>
<div class="t lb" style="left:522.7px;top:222.7px;color:#9e9e9e">10.0%</div>
<div class="t lb" style="left:522.7px;top:251.1px;color:#222">Uncalled</div>
<div class="t lb" style="left:522.7px;top:260.4px;color:#9e9e9e">26.7%</div>
<div class="t lb" style="right:197.4px;top:229.2px;color:#222;letter-spacing:.36px;margin-right:-.36px">Interested</div>
<div class="t lb" style="right:197.4px;top:239.2px;color:#9e9e9e;letter-spacing:.36px;margin-right:-.36px">30.0%</div>
<div class="t lb" style="right:197.4px;top:300.2px;color:#222;letter-spacing:.36px;margin-right:-.36px">Deal</div>
<div class="t lb" style="right:197.4px;top:310.1px;color:#9e9e9e;letter-spacing:.36px;margin-right:-.36px">33.3%</div>
<div class="t sl" style="left:639.9px;width:80px;top:246.0px">9 (30.0%)</div>
<div class="t sl" style="left:576.7px;width:80px;top:257.4px">8 (26.7%)</div>
<div class="t sl" style="left:620.3px;width:80px;top:286.9px">10 (33.3%)</div>
<div class="t" style="left:779.700px;top:181.7px;width:1.900px;height:1.900px;border-radius:50%;background:#444746"></div>
<div class="t" style="left:779.700px;top:185.3px;width:1.900px;height:1.900px;border-radius:50%;background:#444746"></div>
<div class="t" style="left:779.700px;top:188.9px;width:1.900px;height:1.900px;border-radius:50%;background:#444746"></div>
<svg style="left:0;top:0" width="979" height="473"><rect x="513.8" y="175.4" width="276.2" height="171.3" fill="none" stroke="#4a6cd4" stroke-width="1.500"/></svg>
<div class="t" style="left:511.3px;top:172.9px;width:5px;height:5px;background:#1a73e8"></div>
<div class="t" style="left:511.3px;top:258.6px;width:5px;height:5px;background:#1a73e8"></div>
<div class="t" style="left:511.3px;top:344.2px;width:5px;height:5px;background:#1a73e8"></div>
<div class="t" style="left:649.4px;top:172.9px;width:5px;height:5px;background:#1a73e8"></div>
<div class="t" style="left:649.4px;top:344.2px;width:5px;height:5px;background:#1a73e8"></div>
<div class="t" style="left:787.5px;top:172.9px;width:5px;height:5px;background:#1a73e8"></div>
<div class="t" style="left:787.5px;top:258.6px;width:5px;height:5px;background:#1a73e8"></div>
<div class="t" style="left:787.5px;top:344.2px;width:5px;height:5px;background:#1a73e8"></div>
<div class="t" style="left:0;top:442.800px;width:979px;height:8.700px;background:#fff"></div>
<div class="t" style="left:0;top:442.800px;width:29.500px;height:7px;background:#f3f3f3"></div>
<div class="t" style="left:30.600px;top:444.100px;width:475px;height:5.300px;border-radius:2.700px;background:#dadce0"></div>
<div class="t" style="left:953px;top:442.800px;width:9.700px;height:8.200px;border:1px solid #ececec;background:#fff"></div><div class="t" style="left:962px;top:442.800px;width:9.700px;height:8.200px;border:1px solid #ececec;background:#fff"></div>
<svg style="left:955.700px;top:444.800px" width="2.300" height="3.600" viewBox="0 0 23 36"><path d="M23 0L0 18l23 18z" fill="#777"/></svg><svg style="left:966px;top:444.800px" width="2.300" height="3.600" viewBox="0 0 23 36"><path d="M0 0l23 18L0 36z" fill="#777"/></svg>
<div class="t" style="left:0;top:451px;width:979px;height:22px;background:#f9fbfd;border-top:1px solid #ededed"></div>
<div class="t" style="left:35.300px;top:461.900px;width:7px;height:1.200px;background:#444746"></div><div class="t" style="left:38.200px;top:459px;width:1.200px;height:7px;background:#444746"></div>
<div class="t" style="left:60px;top:459.7px;width:9px;height:1.200px;background:#444746"></div>
<div class="t" style="left:60px;top:462.1px;width:9px;height:1.200px;background:#444746"></div>
<div class="t" style="left:60px;top:464.5px;width:9px;height:1.200px;background:#444746"></div>
<div class="t" style="left:84.800px;top:451.300px;width:57.200px;height:21.700px;background:#e1e9f7;border-bottom:1.300px solid #8430ce"></div>
<div class="t" style="left:92.300px;top:458px;font-size:9.600px;font-weight:bold;color:#1a56c8;letter-spacing:.1px">Sheet1</div>
<svg style="left:129.800px;top:461.300px" width="5.200" height="3" viewBox="0 0 52 30"><path d="M0 0h52L26 30z" fill="#1a56c8"/></svg>
<div class="t" style="left:876.700px;top:451.300px;width:66.300px;height:22px;background:#fff;border-left:1px solid #e3e3e3;border-right:1px solid #e3e3e3"></div>
<svg style="left:884.500px;top:457.500px" width="9.500" height="10.500" viewBox="0 0 19 21"><path d="M1.500 0h16A1.500 1.500 0 0 1 19 1.500v15a1.500 1.500 0 0 1-1.500 1.500H12l-2.500 3L7 18H1.500A1.500 1.500 0 0 1 0 16.500v-15A1.500 1.500 0 0 1 1.500 0z" fill="#1a9850"/><path d="M9.500 3.500l1.600 3.900 3.900 1.600-3.900 1.600-1.600 3.900-1.600-3.900L4 9l3.900-1.600z" fill="#fff"/></svg>
<div class="t" style="left:904.500px;top:459.300px;font-size:7.500px;color:#1e9c57">Explore</div>
<svg style="left:958.900px;top:461px" width="4.600" height="6.900" viewBox="0 0 10 15"><path d="M8 1.500l-6 6 6 6" fill="none" stroke="#444746" stroke-width="2.200"/></svg>
</div></body></html>
